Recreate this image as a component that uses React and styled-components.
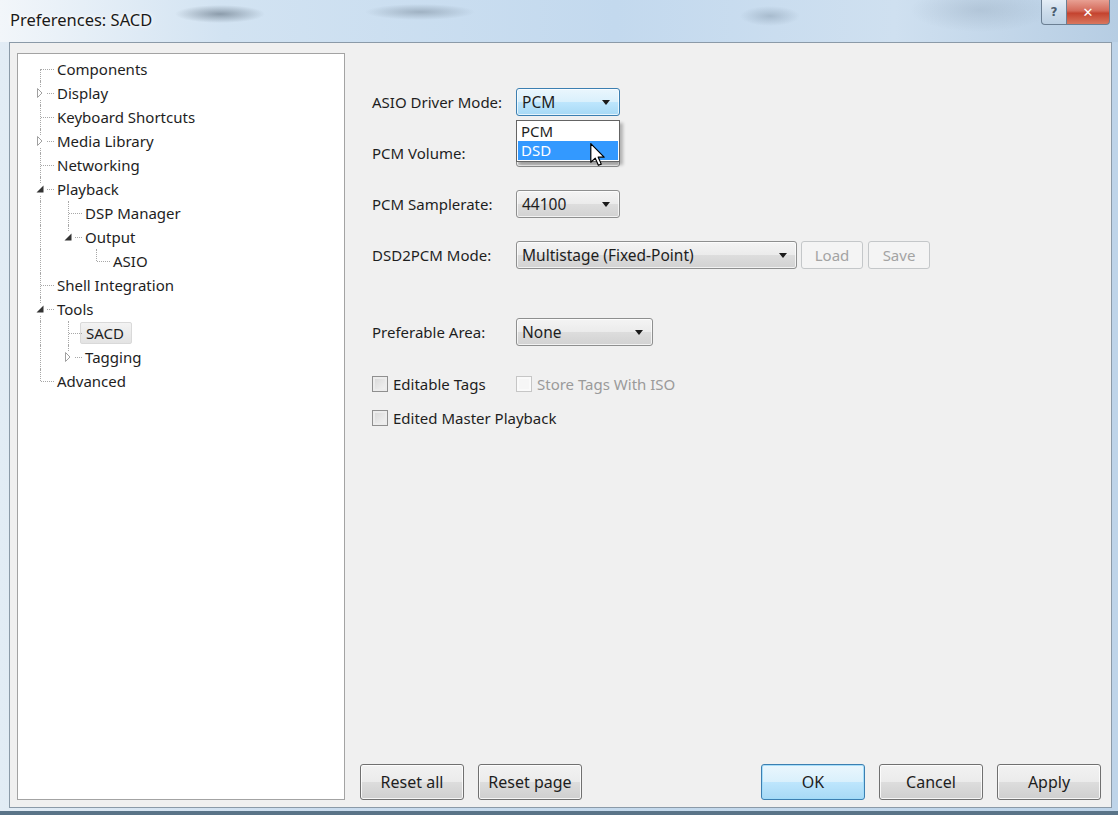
import React from 'react';
import styled, { createGlobalStyle, css } from 'styled-components';

const GlobalStyle = createGlobalStyle`
    html, body {
        margin: 0;
        padding: 0;
        background: #cfdfee;
    }
    * {
        box-sizing: border-box;
    }
`;

const uiFont = `"Noto Sans", "Open Sans", "Liberation Sans", sans-serif`;

const Window = styled.div`
    width: 1118px;
    height: 815px;
    display: flex;
    flex-direction: column;
    font-family: ${uiFont};
    font-size: 15px;
    color: #1e1e1e;
    background: linear-gradient(to right, #e2ecf5 0%, #cadcee 30%, #c4d9ec 60%, #bed4e9 100%);
    border-bottom: 4px solid #5a7488;
    position: relative;
    overflow: hidden;
`;

const TitleBar = styled.div`
    height: 42px;
    flex-shrink: 0;
    display: flex;
    align-items: flex-start;
    padding: 8px 0 0 10px;
    background:
        radial-gradient(ellipse 45px 9px at 220px 14px, rgba(70, 85, 100, 0.5), transparent),
        radial-gradient(ellipse 55px 8px at 420px 12px, rgba(80, 95, 110, 0.35), transparent),
        radial-gradient(ellipse 30px 10px at 770px 16px, rgba(90, 110, 130, 0.3), transparent),
        radial-gradient(ellipse 70px 22px at 980px 10px, rgba(120, 140, 160, 0.25), transparent),
        linear-gradient(to right, #f2f6fa 0%, #d2e3f2 20%, #c3d9ee 55%, #cfe0f0 80%, #b6cde3 100%);
`;

const Title = styled.div`
    font-size: 16.5px;
    color: #1a1a1a;
    text-shadow: 0 0 6px #ffffff, 0 0 3px #ffffff;
`;

const CaptionButtons = styled.div`
    margin-left: auto;
    margin-top: -8px;
    margin-right: 8px;
    display: flex;
`;

const CaptionButton = styled.div`
    height: 25px;
    width: ${p => p.close ? 43 : 26}px;
    display: flex;
    align-items: center;
    justify-content: center;
    border: 1px solid #6b7f93;
    border-top: none;
    font-family: "DejaVu Sans", sans-serif;
    font-size: ${p => p.close ? 13 : 12}px;
    font-weight: bold;
    ${p => p.close ? css`
        color: #ffffff;
        background: linear-gradient(to bottom, #e8a093 0%, #d46a5a 45%, #c4432f 55%, #d9775e 100%);
        border-radius: 0 0 4px 0;
        border-left: none;
    ` : css`
        color: #4b5d70;
        background: linear-gradient(to bottom, #e4edf6 0%, #ccdceb 50%, #bcd0e3 100%);
        border-radius: 0 0 0 4px;
    `}
`;

const Client = styled.div`
    flex: 1;
    display: flex;
    margin: 0 6px 3px 9px;
    background: #f0f0f0;
    border: 1px solid #8b9aa8;
`;

const TreePane = styled.div`
    width: 328px;
    margin: 10px 0 7px 7px;
    background: #ffffff;
    border: 1px solid #a3a3a3;
    padding: 3px 0 0 8px;
`;

const TreeRow = styled.div`
    display: flex;
    height: 24px;
    align-items: stretch;
`;

const Guide = styled.div`
    width: 28px;
    position: relative;
    ${p => p.on && css`
        &::before {
            content: '';
            position: absolute;
            left: 14px;
            top: 0;
            bottom: 0;
            border-left: 1px dotted #a8a8a8;
        }
    `}
`;

const Connector = styled.div`
    width: 28px;
    position: relative;

    &::before {
        content: '';
        position: absolute;
        left: 14px;
        top: ${p => p.first ? '12px' : '0'};
        bottom: ${p => p.last ? '12px' : '0'};
        border-left: 1px dotted #a8a8a8;
    }

    &::after {
        content: '';
        position: absolute;
        left: 15px;
        right: 0;
        top: 12px;
        border-top: 1px dotted #a8a8a8;
    }
`;

const Expander = styled.div`
    position: absolute;
    left: 8px;
    top: 6px;
    width: 12px;
    height: 12px;
    background: #ffffff;
    z-index: 1;
    display: flex;
    align-items: center;
    justify-content: center;
`;

const NodeLabel = styled.div`
    display: flex;
    align-items: center;
    padding: 0 3px;
    margin-top: 1px;
    margin-bottom: 1px;
    white-space: nowrap;
    ${p => p.selected && css`
        background: linear-gradient(to bottom, #f3f3f3, #e3e3e3);
        border: 1px solid #d9d9d9;
        border-radius: 2px;
        padding: 0 7px 0 5px;
        margin-left: -2px;
    `}
`;

const RightPane = styled.div`
    flex: 1;
    display: flex;
    flex-direction: column;
    padding: 45px 10px 7px 15px;
`;

const Form = styled.div`
    position: relative;
    padding-left: 12px;
`;

const FieldRow = styled.div`
    display: flex;
    align-items: center;
    height: 28px;
    margin-bottom: ${p => p.gap ?? 23}px;
`;

const Label = styled.div`
    width: 144px;
    flex-shrink: 0;
`;

const Combo = styled.div`
    position: relative;
    width: ${p => p.width}px;
    height: 28px;
    display: flex;
    align-items: center;
    padding: 0 0 0 5px;
    border: 1px solid ${p => p.focused ? '#3c7fb1' : '#8e8f8f'};
    border-radius: 3px;
    background: ${p => p.focused
        ? 'linear-gradient(to bottom, #eaf6fd 0%, #d9f0fc 50%, #bee6fd 50%, #a7d9f5 100%)'
        : 'linear-gradient(to bottom, #f4f4f4 0%, #ebebeb 50%, #dddddd 50%, #d2d2d2 100%)'};
    box-shadow: inset 0 0 0 1px rgba(255, 255, 255, 0.7);
    font-size: 15.5px;
    white-space: nowrap;
`;

const ComboArrow = styled.div`
    margin-left: auto;
    margin-right: 9px;
    width: 0;
    height: 0;
    border-left: 4px solid transparent;
    border-right: 4px solid transparent;
    border-top: 5px solid #1a1a1a;
`;

const DropList = styled.div`
    position: absolute;
    left: 156px;
    top: 32px;
    width: 104px;
    background: #ffffff;
    border: 1px solid #646464;
    padding: 1px;
    z-index: 3;
    box-shadow: 3px 3px 3px rgba(0, 0, 0, 0.25);
    font-size: 15px;
`;

const DropItem = styled.div`
    height: 19px;
    line-height: 19px;
    padding-left: 3px;
    background: ${p => p.active ? '#3399ff' : 'transparent'};
    color: ${p => p.active ? '#ffffff' : '#1e1e1e'};
`;

const Pointer = styled.svg`
    position: absolute;
    left: 230px;
    top: 55px;
    z-index: 4;
`;

const SmallButton = styled.div`
    width: 62px;
    height: 28px;
    margin-left: ${p => p.first ? 4 : 5}px;
    display: flex;
    align-items: center;
    justify-content: center;
    border: 1px solid #c4c7c9;
    border-radius: 3px;
    background: #f4f4f4;
    color: #a3a3a3;
    font-size: 15px;
`;

const CheckRow = styled.div`
    display: flex;
    align-items: center;
    height: 22px;
    margin-top: ${p => p.top}px;
`;

const Check = styled.label`
    display: flex;
    align-items: center;
    gap: 5px;
    width: ${p => p.column ? '144px' : 'auto'};
    color: ${p => p.disabled ? '#9a9a9a' : '#1e1e1e'};
`;

const Box = styled.span`
    width: 16px;
    height: 16px;
    border: 1px solid ${p => p.disabled ? '#c6c6c6' : '#8f8f8f'};
    background: ${p => p.disabled
        ? '#f6f6f6'
        : 'linear-gradient(135deg, #d6d6d6 0%, #e9e9e9 60%, #f4f4f4 100%)'};
    box-shadow: inset 0 0 0 2px ${p => p.disabled ? '#fafafa' : '#ececec'};
`;

const ButtonBar = styled.div`
    margin-top: auto;
    display: flex;
    gap: 14px;
`;

const Button = styled.div`
    width: 104px;
    height: 36px;
    display: flex;
    align-items: center;
    justify-content: center;
    border: 1px solid ${p => p.primary ? '#3c7fb1' : '#707070'};
    border-radius: 3px;
    background: ${p => p.primary
        ? 'linear-gradient(to bottom, #eaf6fd 0%, #d9f0fc 50%, #bee6fd 50%, #a7d9f5 100%)'
        : 'linear-gradient(to bottom, #f2f2f2 0%, #ebebeb 50%, #dddddd 50%, #cfcfcf 100%)'};
    box-shadow: inset 0 0 0 1px ${p => p.primary ? 'rgba(160, 220, 250, 0.9)' : 'rgba(255, 255, 255, 0.8)'};
    font-size: 16px;
    ${p => p.push && css`margin-left: auto;`}
`;

const treeItems = [
    { label: 'Components', level: 0, first: true },
    { label: 'Display', level: 0, exp: 'closed' },
    { label: 'Keyboard Shortcuts', level: 0 },
    { label: 'Media Library', level: 0, exp: 'closed' },
    { label: 'Networking', level: 0 },
    { label: 'Playback', level: 0, exp: 'open' },
    { label: 'DSP Manager', level: 1, guides: [true] },
    { label: 'Output', level: 1, exp: 'open', guides: [true], last: true },
    { label: 'ASIO', level: 2, guides: [true, false], last: true },
    { label: 'Shell Integration', level: 0 },
    { label: 'Tools', level: 0, exp: 'open' },
    { label: 'SACD', level: 1, guides: [true], selected: true },
    { label: 'Tagging', level: 1, exp: 'closed', guides: [true], last: true },
    { label: 'Advanced', level: 0, last: true },
];

const ExpandGlyph = ({ open }) => (
    <svg width="10" height="10" viewBox="0 0 10 10">
        {open
            ? <path d="M8.5 1.5 L8.5 8.5 L1.5 8.5 Z" fill="#333333" />
            : <path d="M2.5 0.5 L7 5 L2.5 9.5 Z" fill="#ffffff" stroke="#a0a0a0" strokeWidth="1" />}
    </svg>
);

const TreeNode = ({ item }) => (
    <TreeRow>
        {(item.guides || []).map((on, i) => <Guide key={i} on={on} />)}
        <Connector first={item.first} last={item.last}>
            {item.exp && (
                <Expander>
                    <ExpandGlyph open={item.exp === 'open'} />
                </Expander>
            )}
        </Connector>
        <NodeLabel selected={item.selected}>{item.label}</NodeLabel>
    </TreeRow>
);

const App = () => {
    return (
        <>
            <GlobalStyle />
            <Window>
                <TitleBar>
                    <Title>Preferences: SACD</Title>
                    <CaptionButtons>
                        <CaptionButton>?</CaptionButton>
                        <CaptionButton close>✕</CaptionButton>
                    </CaptionButtons>
                </TitleBar>
                <Client>
                    <TreePane>
                        {treeItems.map(item => <TreeNode key={item.label} item={item} />)}
                    </TreePane>
                    <RightPane>
                        <Form>
                            <FieldRow>
                                <Label>ASIO Driver Mode:</Label>
                                <Combo width={104} focused>
                                    PCM
                                    <ComboArrow />
                                </Combo>
                            </FieldRow>
                            <FieldRow>
                                <Label>PCM Volume:</Label>
                                <Combo width={104}>
                                    <ComboArrow />
                                </Combo>
                            </FieldRow>
                            <FieldRow>
                                <Label>PCM Samplerate:</Label>
                                <Combo width={104}>
                                    44100
                                    <ComboArrow />
                                </Combo>
                            </FieldRow>
                            <FieldRow gap={49}>
                                <Label>DSD2PCM Mode:</Label>
                                <Combo width={281}>
                                    Multistage (Fixed-Point)
                                    <ComboArrow />
                                </Combo>
                                <SmallButton first>Load</SmallButton>
                                <SmallButton>Save</SmallButton>
                            </FieldRow>
                            <FieldRow gap={0}>
                                <Label>Preferable Area:</Label>
                                <Combo width={137}>
                                    None
                                    <ComboArrow />
                                </Combo>
                            </FieldRow>
                            <CheckRow top={27}>
                                <Check column>
                                    <Box />
                                    Editable Tags
                                </Check>
                                <Check disabled>
                                    <Box disabled />
                                    Store Tags With ISO
                                </Check>
                            </CheckRow>
                            <CheckRow top={12}>
                                <Check>
                                    <Box />
                                    Edited Master Playback
                                </Check>
                            </CheckRow>

                            <DropList>
                                <DropItem>PCM</DropItem>
                                <DropItem active>DSD</DropItem>
                            </DropList>
                            <Pointer width="16" height="24" viewBox="0 0 13 20">
                                <path d="M0.5 0.5 L0.5 16 L4.2 12.6 L6.8 18.6 L9.2 17.6 L6.7 11.8 L11.6 11.8 Z"
                                      fill="#ffffff" stroke="#000000" strokeWidth="1" strokeLinejoin="round" />
                            </Pointer>
                        </Form>
                        <ButtonBar>
                            <Button>Reset all</Button>
                            <Button>Reset page</Button>
                            <Button primary push>OK</Button>
                            <Button>Cancel</Button>
                            <Button>Apply</Button>
                        </ButtonBar>
                    </RightPane>
                </Client>
            </Window>
        </>
    );
};

export default App;
